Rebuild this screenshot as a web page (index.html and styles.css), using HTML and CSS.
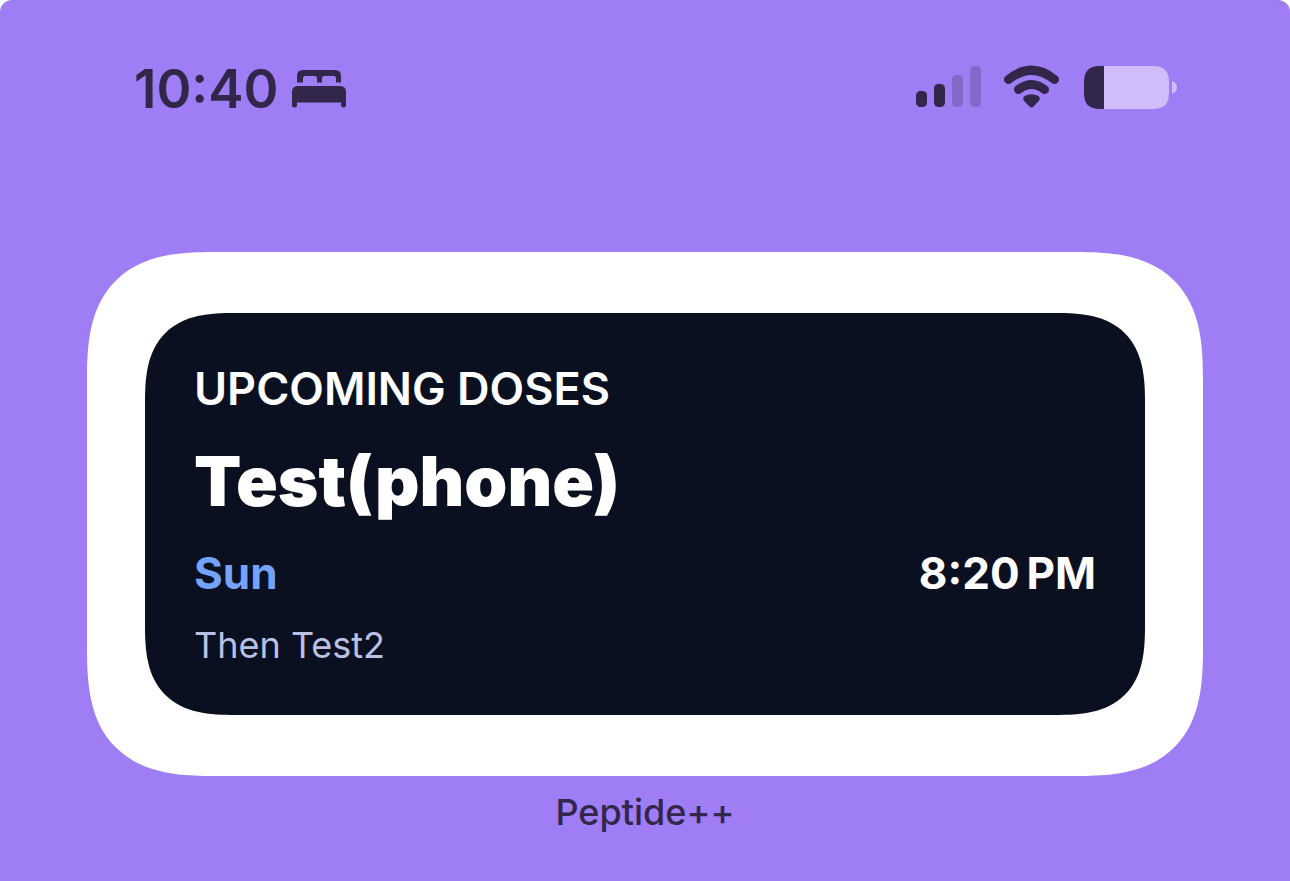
FILE: index.html
```
<!DOCTYPE html>
<html lang="en">
<head>
    <meta charset="UTF-8">
    <meta name="viewport" content="width=device-width, initial-scale=1.0">
    <title>Peptide++ Widget</title>
    <link rel="stylesheet" href="styles.css">
</head>
<body>
    <div class="screen">
        <header class="status-bar">
            <div class="status-left">
                <time class="clock">10:40</time>
                <svg class="icon" width="56" height="38" viewBox="0 0 56 38" role="img" aria-label="Sleep focus">
                    <path d="M6 12.500V6q0-6 6-6h32q6 0 6 6v6.500h-5V8.500q0-2.500-2.500-2.500h-9q-2.500 0-2.500 2.500v4h-5v-4q0-2.500-2.500-2.500h-9q-2.500 0-2.500 2.500v4z"/>
                    <path d="M1 22q0-6 6-6h42q6 0 6 6v13q0 2.500-2.500 2.500T50 35v-2.500H6V35q0 2.500-2.500 2.500T1 35z"/>
                </svg>
            </div>
            <div class="status-right">
                <svg class="icon" width="66" height="42" viewBox="0 0 66 42" role="img" aria-label="Signal strength">
                    <rect x="0" y="25" width="11" height="16" rx="4.500"/>
                    <rect x="18" y="18" width="11" height="23" rx="4.500"/>
                    <rect class="faded" x="36" y="9" width="11" height="32" rx="4.500"/>
                    <rect class="faded" x="54" y="0" width="11" height="41" rx="4.500"/>
                </svg>
                <svg class="icon" width="58" height="44" viewBox="0 0 58 44" role="img" aria-label="Wi-Fi">
                    <path class="wave" d="M4.500 14.500Q27.500-4 50.500 14.500"/>
                    <path class="wave" d="M14.500 24.500Q27.500 14.500 40.500 24.500"/>
                    <path d="M20.300 36.200Q17.700 33 21 30.800Q27.500 27.500 34 30.800Q37.300 33 34.700 36.200L29.500 41.400Q27.500 43.500 25.500 41.400z"/>
                </svg>
                <svg class="icon" width="93" height="43" viewBox="0 0 93 43" role="img" aria-label="Battery">
                    <path class="battery" d="M20 0H69C80 0 85 5 85 16V27C85 38 80 43 69 43H20z"/>
                    <path d="M20 0H16C5 0 0 5 0 16V27C0 38 5 43 16 43H20z"/>
                    <path class="battery" d="M88 15Q93 17 93 21.500T88 28z"/>
                </svg>
            </div>
        </header>

        <main>
            <section class="widget">
                <div class="card">
                    <h1 class="heading">UPCOMING DOSES</h1>
                    <h2 class="dose-name">Test(phone)</h2>
                    <div class="dose-time">
                        <span class="day">Sun</span>
                        <time>8:20&#8239;PM</time>
                    </div>
                    <p class="next-dose">Then Test2</p>
                </div>
            </section>
            <p class="app-name">Peptide++</p>
        </main>
    </div>
</body>
</html>
```

FILE: styles.css
```
* {
    margin: 0;
    padding: 0;
    box-sizing: border-box;
}

body {
    font-family: Inter, 'Liberation Sans', sans-serif;
    background: white;
    color: #32264b;
}

.screen {
    min-height: 100vh;
    padding: 56px 87px 40px;
    background: #9f7df5;
    border-radius: 12px 12px 0 0;
}

.status-bar {
    display: flex;
    justify-content: space-between;
    padding: 0 26px 0 47px;
    margin-bottom: 130px;
}

.status-left,
.status-right {
    display: flex;
    align-items: center;
}

.status-left {
    gap: 12px;
    height: 66px;
}

.status-right {
    gap: 22px;
    height: 62px;
}

.clock {
    font-size: 53px;
    font-weight: 600;
    line-height: 64px;
}

.icon {
    display: block;
    fill: #32264b;
}

.faded {
    fill: #8668c9;
}

.wave {
    fill: none;
    stroke: #32264b;
    stroke-width: 9;
    stroke-linecap: round;
}

.battery {
    fill: #d0bcf9;
}

/* Widget */
.widget {
    padding: 61px 58px;
    background: white;
    border-radius: 128px;
    corner-shape: superellipse(1.45);
}

.card {
    padding: 48px 49px 46px;
    background: #0b1021;
    color: white;
    border-radius: 90px;
    corner-shape: superellipse(1.45);
}

.heading {
    font-size: 45px;
    font-weight: 600;
    line-height: 56px;
}

.dose-name {
    margin: 20px 0;
    font-size: 69px;
    font-weight: 900;
    line-height: 88px;
}

.dose-time {
    display: flex;
    justify-content: space-between;
    margin-bottom: 20px;
    font-size: 44px;
    font-weight: 700;
    line-height: 56px;
}

.day {
    color: #73a3fb;
}

.next-dose {
    font-size: 36px;
    line-height: 48px;
    color: #b9c1e6;
}

.app-name {
    margin-top: 12px;
    font-size: 36px;
    font-weight: 500;
    line-height: 48px;
    text-align: center;
}
```
